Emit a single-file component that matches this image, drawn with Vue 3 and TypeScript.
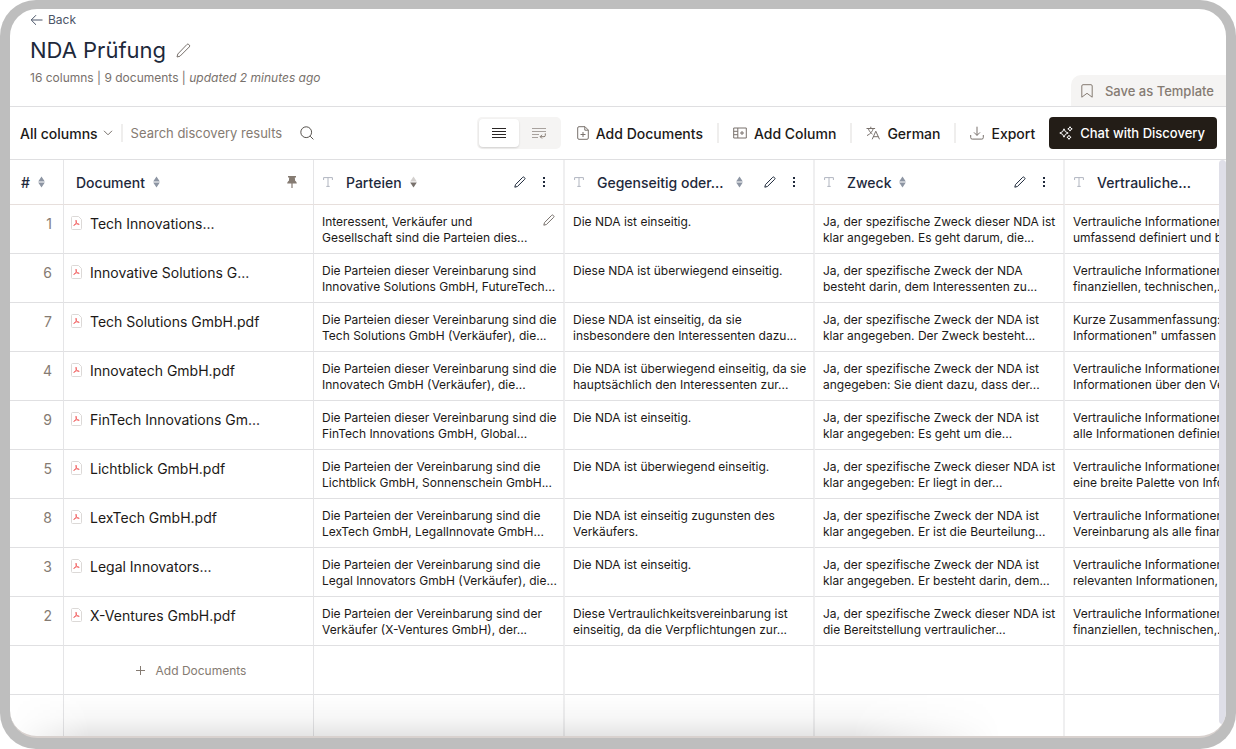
<script setup lang="ts">
import { ref } from 'vue'

interface Column {
  title: string
  sort: 'none' | 'desc' | 'hidden'
  wide?: boolean
}

interface Row {
  id: number
  name: string
  cells: string[][]
}

const search = ref('')
const view = ref<'compact' | 'wrap'>('compact')

const columns: Column[] = [
  { title: 'Parteien', sort: 'desc' },
  { title: 'Gegenseitig oder...', sort: 'none', wide: true },
  { title: 'Zweck', sort: 'none' },
  { title: 'Vertrauliche...', sort: 'hidden' },
]

const rows: Row[] = [
  {
    id: 1,
    name: 'Tech Innovations...',
    cells: [
      ['Interessent, Verkäufer und', 'Gesellschaft sind die Parteien dies...'],
      ['Die NDA ist einseitig.'],
      ['Ja, der spezifische Zweck dieser NDA ist', 'klar angegeben. Es geht darum, die...'],
      ['Vertrauliche Informationen', 'umfassend definiert und b'],
    ],
  },
  {
    id: 6,
    name: 'Innovative Solutions G...',
    cells: [
      ['Die Parteien dieser Vereinbarung sind', 'Innovative Solutions GmbH, FutureTech...'],
      ['Diese NDA ist überwiegend einseitig.'],
      ['Ja, der spezifische Zweck der NDA', 'besteht darin, dem Interessenten zu...'],
      ['Vertrauliche Informationen', 'finanziellen, technischen,...'],
    ],
  },
  {
    id: 7,
    name: 'Tech Solutions GmbH.pdf',
    cells: [
      ['Die Parteien dieser Vereinbarung sind die', 'Tech Solutions GmbH (Verkäufer), die...'],
      ['Diese NDA ist einseitig, da sie', 'insbesondere den Interessenten dazu...'],
      ['Ja, der spezifische Zweck der NDA ist', 'klar angegeben. Der Zweck besteht...'],
      ['Kurze Zusammenfassung:', 'Informationen" umfassen j'],
    ],
  },
  {
    id: 4,
    name: 'Innovatech GmbH.pdf',
    cells: [
      ['Die Parteien dieser Vereinbarung sind die', 'Innovatech GmbH (Verkäufer), die...'],
      ['Die NDA ist überwiegend einseitig, da sie', 'hauptsächlich den Interessenten zur...'],
      ['Ja, der spezifische Zweck der NDA ist', 'angegeben: Sie dient dazu, dass der...'],
      ['Vertrauliche Informationen', 'Informationen über den Ve'],
    ],
  },
  {
    id: 9,
    name: 'FinTech Innovations Gm...',
    cells: [
      ['Die Parteien dieser Vereinbarung sind die', 'FinTech Innovations GmbH, Global...'],
      ['Die NDA ist einseitig.'],
      ['Ja, der spezifische Zweck der NDA ist', 'klar angegeben: Es geht um die...'],
      ['Vertrauliche Informationen', 'alle Informationen definier'],
    ],
  },
  {
    id: 5,
    name: 'Lichtblick GmbH.pdf',
    cells: [
      ['Die Parteien der Vereinbarung sind die', 'Lichtblick GmbH, Sonnenschein GmbH...'],
      ['Die NDA ist überwiegend einseitig.'],
      ['Ja, der spezifische Zweck dieser NDA ist', 'klar angegeben: Er liegt in der...'],
      ['Vertrauliche Informationen', 'eine breite Palette von Info'],
    ],
  },
  {
    id: 8,
    name: 'LexTech GmbH.pdf',
    cells: [
      ['Die Parteien der Vereinbarung sind die', 'LexTech GmbH, LegalInnovate GmbH...'],
      ['Die NDA ist einseitig zugunsten des', 'Verkäufers.'],
      ['Ja, der spezifische Zweck der NDA ist', 'klar angegeben. Er ist die Beurteilung...'],
      ['Vertrauliche Informationen', 'Vereinbarung als alle finan'],
    ],
  },
  {
    id: 3,
    name: 'Legal Innovators...',
    cells: [
      ['Die Parteien der Vereinbarung sind die', 'Legal Innovators GmbH (Verkäufer), die...'],
      ['Die NDA ist einseitig.'],
      ['Ja, der spezifische Zweck der NDA ist', 'klar angegeben. Er besteht darin, dem...'],
      ['Vertrauliche Informationen', 'relevanten Informationen,'],
    ],
  },
  {
    id: 2,
    name: 'X-Ventures GmbH.pdf',
    cells: [
      ['Die Parteien der Vereinbarung sind der', 'Verkäufer (X-Ventures GmbH), der...'],
      ['Diese Vertraulichkeitsvereinbarung ist', 'einseitig, da die Verpflichtungen zur...'],
      ['Ja, der spezifische Zweck dieser NDA ist', 'die Bereitstellung vertraulicher...'],
      ['Vertrauliche Informationen', 'finanziellen, technischen,...'],
    ],
  },
]
</script>

<template>
  <div class="frame">
    <main class="app">
      <header class="head">
        <div class="head-main">
          <a class="back" href="#">
            <svg width="13" height="12" viewBox="0 0 13 12"><path d="M12.500 6H1.500M6 1.200 1.200 6 6 10.800" /></svg>
            Back
          </a>
          <div class="title">
            <h1>NDA Prüfung</h1>
            <button class="icon-btn muted" aria-label="Rename">
              <svg width="15" height="15" viewBox="0 0 15 15"><path d="M1 14 1.800 11 10.900 1.500a1.300 1.300 0 0 1 1.900 0l.5.5a1.300 1.300 0 0 1 0 1.900L4 13.200Z" /></svg>
            </button>
          </div>
          <p class="meta">16 columns | 9 documents | <em>updated 2 minutes ago</em></p>
        </div>
        <button class="template">
          <svg width="12" height="14" viewBox="0 0 12 14"><path d="M.8 13.2V2A1.3 1.3 0 0 1 2 .7h8A1.3 1.3 0 0 1 11.2 2v11.2L6 9.3Z" /></svg>
          Save as Template
        </button>
      </header>

      <div class="toolbar">
        <button class="all">
          All columns
          <svg width="10" height="6" viewBox="0 0 10 6"><path d="M1 .8 5 4.8 9 .8" /></svg>
        </button>
        <span class="rule short"></span>
        <div class="search">
          <input v-model="search" type="text" aria-label="Search discovery results" placeholder="Search discovery results" />
          <button class="icon-btn" aria-label="Search">
            <svg width="14" height="14" viewBox="0 0 14 14"><circle cx="6.2" cy="6.2" r="5.4" /><path d="m10.2 10.2 3.2 3.2" /></svg>
          </button>
        </div>

        <div class="toggle">
          <button :class="{ on: view === 'compact' }" aria-label="Compact rows" @click="view = 'compact'">
            <svg width="14" height="12" viewBox="0 0 14 12"><path d="M0 1.5h14M0 4.5h14M0 7.5h14M0 10.5h14" /></svg>
          </button>
          <button :class="{ on: view === 'wrap' }" aria-label="Wrapped rows" @click="view = 'wrap'">
            <svg width="14" height="12" viewBox="0 0 14 12"><path d="M0 1.500h14M0 4.500h14M0 7.500h7M0 10.500h6" /><path class="turn" d="M13.300 6.400v2a1.300 1.300 0 0 1-1.300 1.300H8.200M10 7.800 8.200 9.700l1.800 1.800" /></svg>
          </button>
        </div>

        <div class="actions">
          <button class="action">
            <svg width="12" height="14" viewBox="0 0 12 14"><path d="M.7 12V2A1.3 1.3 0 0 1 2 .7h6l3.300 3.300v8a1.3 1.3 0 0 1-1.3 1.3H2A1.3 1.3 0 0 1 .7 12ZM7.8.8v3.400h3.400M6 6v5M3.5 8.5h5" /></svg>
            Add Documents
          </button>
          <span class="rule"></span>
          <button class="action">
            <svg width="14" height="12" viewBox="0 0 14 12"><path d="M.7 1h12.600v10H.7ZM4.800 1v10M.7 4.300h4.100M.7 7.700h4.100M9 4v4M7 6h4" /></svg>
            Add Column
          </button>
          <span class="rule"></span>
          <button class="action">
            <svg width="14" height="14" viewBox="0 0 14 14"><path d="M.5 2.5h8.6M4.8.7v1.8M7.3 2.5C6.5 5.5 4.3 8 1 9.6M2.3 2.5C3 5 4.8 7 6.5 8.2M6.2 13.3l3.6-8.1 3.7 8.1M7.3 10.7h5" /></svg>
            German
          </button>
          <span class="rule"></span>
          <button class="action">
            <svg width="14" height="14" viewBox="0 0 14 14"><path d="M7 .7v8.6M4 6.4l3 3 3-3M.7 9v2.6a1.5 1.5 0 0 0 1.5 1.5h9.6a1.5 1.5 0 0 0 1.5-1.5V9" /></svg>
            Export
          </button>
          <button class="chat">
            <svg width="14" height="14" viewBox="0 0 14 14"><path d="M5 2.800Q5.600 6.400 9.200 7 5.600 7.600 5 11.200 4.400 7.600.8 7 4.400 6.400 5 2.800Z" /><path d="M11 .7q.4 1.800 2.200 2.200-1.800.4-2.200 2.200Q10.600 3.300 8.800 2.900 10.600 2.500 11 .7ZM10 9.200q.4 1.700 2.100 2.100-1.700.4-2.100 2.100-.4-1.700-2.100-2.100Q9.600 10.900 10 9.200Z" /></svg>
            Chat with Discovery
          </button>
        </div>
      </div>

      <div class="body">
        <div class="viewport">
          <table>
            <colgroup>
              <col class="c-num" />
              <col class="c-text" />
              <col class="c-first" />
              <col v-for="n in 3" :key="n" class="c-text" />
            </colgroup>
            <thead>
              <tr>
                <th>
                  <div class="th num">
                    <span>#</span>
                    <svg class="sort" width="7" height="12" viewBox="0 0 7 12"><path d="M3.500.5 6.800 5.400H.2ZM.2 6.600h6.600L3.500 11.500Z" /></svg>
                  </div>
                </th>
                <th>
                  <div class="th doc">
                    <span>Document</span>
                    <svg class="sort" width="7" height="12" viewBox="0 0 7 12"><path d="M3.500.5 6.800 5.400H.2ZM.2 6.600h6.600L3.500 11.500Z" /></svg>
                    <svg class="pin" width="10" height="12" viewBox="0 0 10 12"><path d="M1 0h8v1.600H7.800l.3 3.200C9.200 5.400 9.700 6.300 9.800 7.500H5.600V12H4.400V7.500H.2C.3 6.300.8 5.400 1.900 4.800l.3-3.200H1Z" /></svg>
                  </div>
                </th>
                <th v-for="c in columns" :key="c.title" class="wide-line">
                  <div class="th text">
                    <svg class="type" width="10" height="10" viewBox="0 0 10 10"><path d="M.6 3V.6h8.800V3M5 .6v8.800M3.300 9.400h3.400" /></svg>
                    <span :class="{ truncated: c.wide }">{{ c.title }}</span>
                    <svg v-if="c.sort !== 'hidden'" class="sort" :class="c.sort" width="7" height="12" viewBox="0 0 7 12"><path class="up" d="M3.500.5 6.800 5.400H.2Z" /><path d="M.2 6.600h6.600L3.500 11.500Z" /></svg>
                    <div class="tools">
                      <button class="icon-btn" :aria-label="'Edit ' + c.title">
                        <svg width="12" height="12" viewBox="0 0 12 12"><path d="M.8 11.200 1.500 8.600 8.700 1.300a1.100 1.100 0 0 1 1.500 0l.5.5a1.100 1.100 0 0 1 0 1.500L3.400 10.500Z" /></svg>
                      </button>
                      <button class="icon-btn" :aria-label="'Menu for ' + c.title">
                        <svg class="dots" width="4" height="12" viewBox="0 0 4 12"><path d="M1 1h2v2H1ZM1 5h2v2H1ZM1 9h2v2H1Z" /></svg>
                      </button>
                    </div>
                  </div>
                </th>
              </tr>
            </thead>
            <tbody>
              <tr v-for="(r, i) in rows" :key="r.id">
                <td class="id">{{ r.id }}</td>
                <td class="name">
                  <a href="#">
                    <svg width="11" height="14" viewBox="0 0 11 14"><path class="sheet" d="M.5 12.500v-11a1 1 0 0 1 1-1H7.500L10.500 3.500v9a1 1 0 0 1-1 1h-8a1 1 0 0 1-1-1Z" /><path class="pdf" d="M5 4.200c.8.100.5 2.100-.3 3.500-.7 1.200-1.600 2.100-1.900 1.800-.4-.4 1.400-1.500 3.100-1.700 1.300-.2 2.400.2 2.300.6-.2.400-1.700-.2-2.500-1.200C5 6.300 4.500 4.300 5 4.200Z" /></svg>
                    <span>{{ r.name }}</span>
                  </a>
                </td>
                <td v-for="(cell, j) in r.cells" :key="j" class="answer wide-line">
                  <div class="cell">
                    <p><span v-for="line in cell" :key="line">{{ line }}</span></p>
                    <button v-if="i === 0 && j === 0" class="icon-btn muted" aria-label="Edit answer">
                      <svg width="12" height="12" viewBox="0 0 12 12"><path d="M.8 11.200 1.500 8.600 8.700 1.300a1.100 1.100 0 0 1 1.500 0l.5.5a1.100 1.100 0 0 1 0 1.500L3.400 10.500Z" /></svg>
                    </button>
                  </div>
                </td>
              </tr>
              <tr>
                <td></td>
                <td class="add">
                  <button>
                    <svg width="9" height="9" viewBox="0 0 9 9"><path d="M4.500 0v9M0 4.500h9" /></svg>
                    Add Documents
                  </button>
                </td>
                <td v-for="n in 4" :key="n" class="wide-line"></td>
              </tr>
              <tr class="rest">
                <td></td>
                <td></td>
                <td v-for="n in 4" :key="n" class="wide-line"></td>
              </tr>
            </tbody>
          </table>
          <div class="shade"></div>
        </div>
        <div class="scrollbar"></div>
      </div>
    </main>
  </div>
</template>

<style>
body {
  margin: 0;
  background: #fff;
}
</style>

<style scoped>
* {
  box-sizing: border-box;
}
.frame {
  height: 100vh;
  padding: 9px 10px 11px;
  background: #bebebe;
  border-radius: 36px;
  font-family: Inter, 'Liberation Sans', sans-serif;
  color: #1c1917;
}
.app {
  display: flex;
  flex-direction: column;
  height: 100%;
  overflow: hidden;
  background: #fff;
  border-radius: 27px;
  border-bottom: 2px solid #d8d1ce;
}
button {
  display: flex;
  align-items: center;
  padding: 0;
  border: 0;
  background: none;
  font: inherit;
  color: inherit;
  white-space: nowrap;
  cursor: pointer;
}
svg {
  flex: none;
  fill: none;
  stroke: currentColor;
  stroke-width: 1;
}
a {
  color: inherit;
  text-decoration: none;
}
.icon-btn {
  color: #1e293b;
}
.icon-btn.muted {
  color: #78716c;
}
.head {
  display: flex;
  flex: none;
  align-items: flex-end;
  justify-content: space-between;
  border-bottom: 1px solid #dfdfe1;
}
.head-main {
  padding: 3px 0 20px 20px;
}
.back {
  display: flex;
  align-items: center;
  gap: 5px;
  font-size: 12px;
  line-height: 16px;
  color: #4b5568;
}
.title {
  display: flex;
  align-items: center;
  gap: 10px;
  margin-top: 6px;
}
h1 {
  margin: 0;
  font-size: 22px;
  font-weight: 400;
  line-height: 32px;
  color: #1e293b;
}
.meta {
  margin: 4px 0 0;
  font-size: 12px;
  line-height: 16px;
  color: #78716c;
}
.template {
  gap: 12px;
  height: 31px;
  padding: 0 12px 0 10px;
  border-radius: 10px 0 0 0;
  background: #f5f4f3;
  font-size: 13px;
  font-weight: 500;
  color: #857b72;
}
.toolbar {
  display: flex;
  flex: none;
  align-items: center;
  height: 53px;
  padding: 0 9px 0 10px;
  border-bottom: 1px solid #dfdfe1;
  font-size: 14px;
  font-weight: 500;
}
.all {
  gap: 5px;
}
.all svg {
  color: #78716c;
}
.rule {
  flex: none;
  width: 2px;
  height: 20px;
  background: #efeeed;
}
.rule.short {
  margin: 0 8px;
  height: 18px;
}
.search {
  display: flex;
  flex: 1;
  align-items: center;
}
.search input {
  width: 169px;
  padding: 0;
  border: 0;
  outline: 0;
  background: none;
  font: 400 13px Inter, 'Liberation Sans', sans-serif;
}
.search input::placeholder {
  color: #857b72;
  opacity: 1;
}
.search .icon-btn {
  color: #57534e;
}
.toggle {
  display: flex;
  padding: 2px;
  border-radius: 5px;
  background: #f5f4f3;
}
.toggle button {
  justify-content: center;
  width: 40px;
  height: 28px;
  border-radius: 4px;
  color: #a8a29e;
}
.toggle button.on {
  background: #fff;
  color: #292524;
  box-shadow: 0 1px 2px rgba(0, 0, 0, 0.15);
}
.turn {
  stroke: #857b72;
}
.actions {
  display: flex;
  align-items: center;
  gap: 14px;
  margin-left: 16px;
}
.action {
  gap: 7px;
}
.action svg {
  color: #78716c;
}
.chat {
  gap: 7px;
  height: 32px;
  padding: 0 12px 0 10px;
  border-radius: 4px;
  background: #231d17;
  font-size: 13px;
  color: #fff;
}
.body {
  display: flex;
  flex: 1;
  min-height: 0;
}
.viewport {
  position: relative;
  flex: 1;
  min-width: 0;
  overflow: hidden;
}
.scrollbar {
  flex: none;
  width: 7px;
  margin-bottom: 12px;
  border-radius: 4px;
  background: #dfdfe8;
}
table {
  width: 100%;
  min-width: 1305px;
  height: 100%;
  table-layout: fixed;
  border-collapse: separate;
  border-spacing: 0;
}
.c-num {
  width: 54px;
}
.c-text {
  width: 250px;
}
.c-first {
  width: 251px;
}
th,
td {
  height: 49px;
  padding: 0;
  border-right: 1px solid #e5e5e7;
  border-bottom: 1px solid #e0e0e2;
  text-align: left;
  vertical-align: top;
  overflow: hidden;
}
th {
  height: 45px;
  border-bottom-color: #e7dfdc;
  font-size: 14px;
  font-weight: 500;
  color: #1e293b;
}
.wide-line {
  border-right: 2px solid #efeff0;
}
.th {
  display: flex;
  align-items: center;
  height: 44px;
  gap: 8px;
  white-space: nowrap;
}
.num {
  padding-left: 11px;
}
.doc {
  padding: 0 16px 0 12px;
}
.text {
  padding: 0 17px 0 9px;
}
.text .type {
  margin-right: 5px;
  color: #b1b6c0;
}
.truncated {
  min-width: 131px;
}
.sort,
.pin,
.dots {
  stroke: none;
  fill: #8d95a3;
}
.desc {
  fill: #78716c;
}
.desc .up {
  fill: #d3d0ce;
}
.pin {
  margin-left: auto;
  fill: #857b72;
}
.dots {
  fill: #1e293b;
}
.tools {
  display: flex;
  gap: 16px;
  margin-left: auto;
}
.id {
  padding: 9px 11px 0 0;
  text-align: right;
  font-size: 14px;
  line-height: 20px;
  color: #857b72;
}
.name {
  padding: 9px 0 0 7px;
  font-size: 14px;
  line-height: 20px;
}
.name a {
  display: flex;
  gap: 8px;
}
.name svg {
  margin-top: 2px;
}
.sheet {
  stroke: #dcd9d7;
}
.pdf {
  stroke: #f05252;
  stroke-width: 0.8;
}
.answer {
  padding: 9px 8px 0;
  font-size: 12px;
  line-height: 16px;
}
.cell {
  display: flex;
  align-items: flex-start;
  justify-content: space-between;
}
.cell p {
  margin: 0;
  white-space: nowrap;
}
.cell p span {
  display: block;
}
.add button {
  gap: 11px;
  height: 48px;
  margin: 0 auto;
  padding-left: 5px;
  font-size: 12px;
  color: #857b72;
}
.rest td {
  height: auto;
  border-bottom: 0;
}
.shade {
  position: absolute;
  left: 0;
  bottom: 0;
  width: 82%;
  height: 42px;
  background: linear-gradient(to top, rgba(0, 0, 0, 0.1), rgba(0, 0, 0, 0.03) 45%, transparent);
  mask-image: linear-gradient(to right, transparent, #000 8%, #000 85%, transparent);
  pointer-events: none;
}
</style>
